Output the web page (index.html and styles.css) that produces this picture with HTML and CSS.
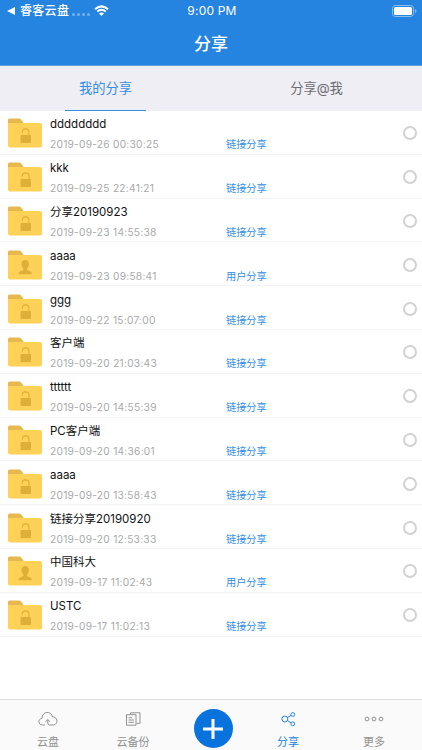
FILE: index.html
```html
<!DOCTYPE html>
<html lang="zh-CN">
<head>
    <meta charset="UTF-8">
    <meta name="viewport" content="width=device-width, initial-scale=1.0">
    <title>分享</title>
    <link rel="stylesheet" href="styles.css">
</head>
<body>
    <!-- Shared icons -->
    <svg class="sprite">
        <symbol id="folder" viewBox="0 0 34 30">
            <path d="M0 8V2Q0 .5 1.500 .5H11Q12.500 .5 13.300 1.700L16 5.500V9H0z" fill="#e6b84e"/>
            <path d="M0 5H32Q34 5 34 7V27.500Q34 29.500 32 29.500H2Q0 29.500 0 27.500z" fill="#ffd257"/>
        </symbol>
        <symbol id="lock" viewBox="0 0 34 30">
            <rect x="12.500" y="17" width="10.500" height="8" rx=".7" fill="#dfb037"/>
            <path d="M14.300 14.500C14.300 9.700 21 9.700 21 14.500V17" fill="none" stroke="#dfb037" stroke-width="1.100"/>
        </symbol>
        <symbol id="person" viewBox="0 0 34 30">
            <path d="M17.200 10C19.700 10 21 11.700 20.900 14C20.800 16 20 17.500 19.100 18.500V20L23 21.700Q24 22.300 24 24.300H10.500Q10.500 22.300 11.500 21.700L15.300 20V18.500C14.400 17.500 13.600 16 13.500 14C13.400 11.700 14.700 10 17.200 10z" fill="#dfb037"/>
        </symbol>
    </svg>

    <div class="screen">
        <header class="header">
            <div class="status-bar">
                <div class="status-left">
                    <svg class="back" viewBox="0 0 8 8"><path d="M0 4L8 0V8z" fill="#fff"/></svg>
                    <span class="carrier">睿客云盘</span>
                    <span class="signal"><i></i><i></i><i></i><i></i></span>
                    <svg class="wifi" viewBox="0 0 15 11">
                        <path d="M1 4.200Q7.500-1.500 14 4.200M3.300 6.600Q7.500 2.900 11.700 6.600" fill="none" stroke="#fff" stroke-width="2"/>
                        <path d="M5 8.400Q7.500 6.400 10 8.400L7.500 11z" fill="#fff"/>
                    </svg>
                </div>
                <span class="clock">9:00 PM</span>
                <div class="status-right">
                    <svg class="battery" viewBox="0 0 25 12">
                        <rect x=".5" y=".5" width="21" height="11" rx="3" fill="none" stroke="#8fbfee"/>
                        <rect x="2" y="2" width="18" height="8" rx="1.500" fill="#fff"/>
                        <path d="M23 4Q24.500 4.500 24.500 6T23 8z" fill="#8fbfee"/>
                    </svg>
                </div>
            </div>
            <h1 class="title">分享</h1>
        </header>

        <nav class="tabs">
            <div class="tab active"><span>我的分享</span></div>
            <div class="tab"><span>分享@我</span></div>
        </nav>

        <main class="list" id="list"></main>

        <footer class="tab-bar">
            <div class="bar-item">
                <svg viewBox="0 0 20 16" class="bar-icon">
                    <path d="M7 14H4.500C0 14-.3 7.800 4 7.300C4 0 13.500-.5 14.500 5.800C20 5.700 20.500 13.500 15.500 14H11.500Q9.800 14 9.800 12V9M7.500 10.700L9.800 8.500L12 10.700"/>
                </svg>
                <span>云盘</span>
            </div>
            <div class="bar-item">
                <svg viewBox="0 0 20 16" class="bar-icon">
                    <path d="M7.500 3.500V1.800H17V12.300H13.500M3.500 3.700H13V14.200H3.500zM5.500 6.700H9M5.500 9H11M5.500 11.300H11"/>
                </svg>
                <span>云备份</span>
            </div>
            <div class="bar-item">
                <button class="add-btn">
                    <svg viewBox="0 0 20 20"><path d="M10 0V20M0 10H20" stroke="#fff" stroke-width="3"/></svg>
                </button>
            </div>
            <div class="bar-item active">
                <svg viewBox="0 0 20 16" class="bar-icon">
                    <circle cx="6.800" cy="8" r="3"/>
                    <circle cx="14.800" cy="3.500" r="1.900"/>
                    <circle cx="14.800" cy="12.800" r="1.900"/>
                    <path d="M9.400 6.500L13.100 4.500M9.400 9.500L13.100 11.800"/>
                </svg>
                <span>分享</span>
            </div>
            <div class="bar-item last">
                <svg viewBox="0 0 20 16" class="bar-icon">
                    <circle cx="3" cy="8" r="1.900"/>
                    <circle cx="10" cy="8" r="1.900"/>
                    <circle cx="17" cy="8" r="1.900"/>
                </svg>
                <span>更多</span>
            </div>
        </footer>
    </div>

    <script>
        // name, time, kind of share
        const shares = [
            ['dddddddd', '2019-09-26 00:30:25', 'link'],
            ['kkk', '2019-09-25 22:41:21', 'link'],
            ['分享20190923', '2019-09-23 14:55:38', 'link'],
            ['aaaa', '2019-09-23 09:58:41', 'user'],
            ['ggg', '2019-09-22 15:07:00', 'link'],
            ['客户端', '2019-09-20 21:03:43', 'link'],
            ['tttttt', '2019-09-20 14:55:39', 'link'],
            ['PC客户端', '2019-09-20 14:36:01', 'link'],
            ['aaaa', '2019-09-20 13:58:43', 'link'],
            ['链接分享20190920', '2019-09-20 12:53:33', 'link'],
            ['中国科大', '2019-09-17 11:02:43', 'user'],
            ['USTC', '2019-09-17 11:02:13', 'link']
        ];

        document.getElementById('list').innerHTML = shares.map(([name, time, kind]) => `
            <div class="row">
                <svg class="folder"><use href="#folder"/><use href="#${kind === 'user' ? 'person' : 'lock'}"/></svg>
                <div class="info">
                    <div class="name">${name}</div>
                    <div class="meta">
                        <span class="time">${time}</span>
                        <span class="kind">${kind === 'user' ? '用户分享' : '链接分享'}</span>
                    </div>
                </div>
                <span class="check"></span>
            </div>`).join('');
    </script>
</body>
</html>
```
FILE: styles.css
```css
* {
    box-sizing: border-box;
}

body {
    margin: 0;
    background-color: #fff;
    font-family: Inter, "Noto Sans CJK SC", sans-serif;
}

.sprite {
    display: none;
}

.screen {
    display: flex;
    flex-direction: column;
    width: 422px;
    height: 750px;
    overflow: hidden;
}

/* Header */
.header {
    height: 66px;
    background-color: #2584e0;
    border-bottom: 1px solid #5d9fdf;
    color: #fff;
}

.status-bar {
    display: grid;
    grid-template-columns: 1fr auto 1fr;
    align-items: center;
    height: 20px;
    padding: 0 5px 0 7px;
}

.status-left {
    display: flex;
    align-items: center;
}

.back {
    width: 8px;
    height: 8px;
}

.carrier {
    margin-left: 5px;
    padding-top: 1px;
    font-size: 12px;
    line-height: 20px;
    font-weight: 500;
    letter-spacing: 0.3px;
}

.signal {
    display: flex;
    gap: 2px;
    margin: 8px 0 0 3px;
}

.signal i {
    width: 3px;
    height: 3px;
    border-radius: 50%;
    background-color: #75b1eb;
}

.wifi {
    width: 15px;
    height: 11px;
    margin-left: 4px;
}

.clock {
    font-size: 12px;
    letter-spacing: 0.2px;
}

.status-right {
    display: flex;
    justify-content: flex-end;
}

.battery {
    width: 25px;
    height: 12px;
}

.title {
    margin: 0;
    font-size: 17px;
    line-height: 48px;
    font-weight: 500;
    text-align: center;
}

/* Tabs */
.tabs {
    display: flex;
    height: 45px;
    background-color: #efeef5;
}

.tab {
    display: flex;
    flex: 1;
    justify-content: center;
    color: #6d6d72;
    font-size: 13.3px;
    line-height: 44px;
}

.tab.active {
    color: #348ce4;
}

.tab.active span {
    width: 81px;
    border-bottom: 1px solid #348ce4;
    text-align: center;
}

/* Share list */
.list {
    flex: 1;
}

.row {
    display: flex;
    align-items: center;
    height: 43.8px;
    padding: 2px 5px 0 8px;
    border-bottom: 1px solid #f3f3f3;
}

.folder {
    width: 34px;
    height: 30px;
}

.info {
    flex: 1;
    margin-left: 8px;
    padding-top: 2px;
}

.name {
    height: 20px;
    color: #111;
    font-size: 11.5px;
    line-height: 20px;
}

.meta {
    display: flex;
    height: 20px;
    font-size: 10.2px;
    line-height: 20px;
}

.time {
    width: 176px;
    color: #a9a9a9;
    letter-spacing: 0.25px;
}

.kind {
    color: #348fe6;
}

.check {
    width: 14px;
    height: 14px;
    border: 2px solid #d2d2d2;
    border-radius: 50%;
}

/* Bottom bar */
.tab-bar {
    display: grid;
    grid-template-columns: 96px 74px 86px 64px 102px;
    height: 51px;
    border-top: 1px solid #dcdcdc;
    background-color: #fafafa;
}

.bar-item {
    display: flex;
    flex-direction: column;
    align-items: center;
    padding-top: 11px;
    color: #929292;
    font-size: 11px;
    line-height: 16px;
}

.bar-item span {
    margin-top: 7px;
}

.bar-item.active {
    color: #2584dc;
}

.bar-item.last {
    padding-left: 6px;
}

.bar-icon {
    width: 20px;
    height: 16px;
    fill: none;
    stroke: currentColor;
    stroke-width: 1;
}

.add-btn {
    display: flex;
    flex-shrink: 0;
    align-items: center;
    justify-content: center;
    width: 39px;
    height: 39px;
    margin-top: -2px;
    padding: 0;
    border: none;
    border-radius: 50%;
    background-color: #0873dc;
}

.add-btn svg {
    width: 20px;
    height: 20px;
}
```
